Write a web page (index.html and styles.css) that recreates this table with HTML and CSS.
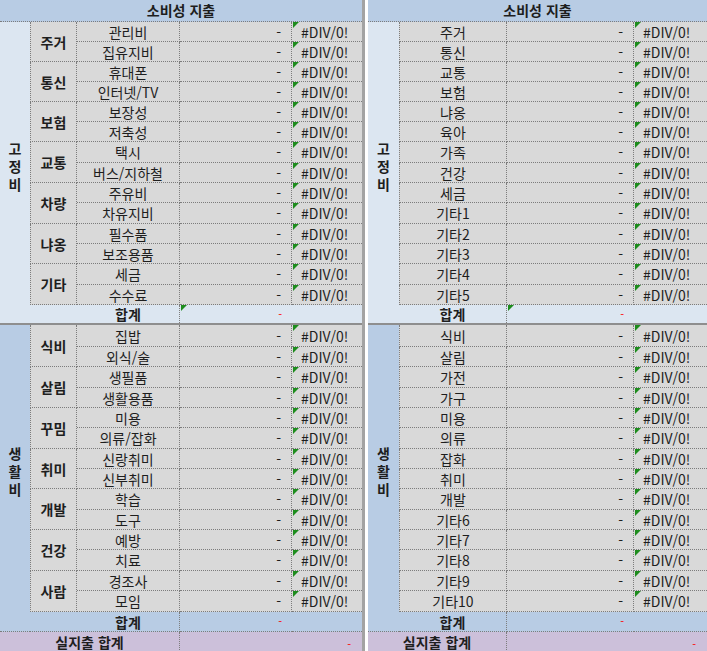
FILE: index.html
```html
<!DOCTYPE html>
<html lang="ko">
<head>
<meta charset="utf-8">
<title>소비성 지출</title>
<link rel="stylesheet" href="styles.css">
</head>
<body>
<div class="sheet">
  <div class="tbl tbl-left">
    <div class="hd">소비성 지출</div>
    <div class="cat cat-fix"><span class="vtext">고정비</span></div>
    <div class="grp">주거</div><div class="item">관리비</div><div class="val">-</div><div class="err">#DIV/0!</div>
    <div class="item">집유지비</div><div class="val">-</div><div class="err">#DIV/0!</div>
    <div class="grp">통신</div><div class="item">휴대폰</div><div class="val">-</div><div class="err">#DIV/0!</div>
    <div class="item">인터넷/TV</div><div class="val">-</div><div class="err">#DIV/0!</div>
    <div class="grp">보험</div><div class="item">보장성</div><div class="val">-</div><div class="err">#DIV/0!</div>
    <div class="item">저축성</div><div class="val">-</div><div class="err">#DIV/0!</div>
    <div class="grp">교통</div><div class="item">택시</div><div class="val">-</div><div class="err">#DIV/0!</div>
    <div class="item">버스/지하철</div><div class="val">-</div><div class="err">#DIV/0!</div>
    <div class="grp">차량</div><div class="item">주유비</div><div class="val">-</div><div class="err">#DIV/0!</div>
    <div class="item">차유지비</div><div class="val">-</div><div class="err">#DIV/0!</div>
    <div class="grp">냐옹</div><div class="item">필수품</div><div class="val">-</div><div class="err">#DIV/0!</div>
    <div class="item">보조용품</div><div class="val">-</div><div class="err">#DIV/0!</div>
    <div class="grp">기타</div><div class="item">세금</div><div class="val">-</div><div class="err">#DIV/0!</div>
    <div class="item">수수료</div><div class="val">-</div><div class="err">#DIV/0!</div>
    <div class="sum-blank sum-fix"></div><div class="sum-label sum-fix">합계</div><div class="sum-val sum-fix flag">-</div><div class="sum-end sum-fix"></div>
    <div class="sep"></div>
    <div class="cat cat-life"><span class="vtext">생활비</span></div>
    <div class="grp">식비</div><div class="item">집밥</div><div class="val">-</div><div class="err">#DIV/0!</div>
    <div class="item">외식/술</div><div class="val">-</div><div class="err">#DIV/0!</div>
    <div class="grp">살림</div><div class="item">생필품</div><div class="val">-</div><div class="err">#DIV/0!</div>
    <div class="item">생활용품</div><div class="val">-</div><div class="err">#DIV/0!</div>
    <div class="grp">꾸밈</div><div class="item">미용</div><div class="val">-</div><div class="err">#DIV/0!</div>
    <div class="item">의류/잡화</div><div class="val">-</div><div class="err">#DIV/0!</div>
    <div class="grp">취미</div><div class="item">신랑취미</div><div class="val">-</div><div class="err">#DIV/0!</div>
    <div class="item">신부취미</div><div class="val">-</div><div class="err">#DIV/0!</div>
    <div class="grp">개발</div><div class="item">학습</div><div class="val">-</div><div class="err">#DIV/0!</div>
    <div class="item">도구</div><div class="val">-</div><div class="err">#DIV/0!</div>
    <div class="grp">건강</div><div class="item">예방</div><div class="val">-</div><div class="err">#DIV/0!</div>
    <div class="item">치료</div><div class="val">-</div><div class="err">#DIV/0!</div>
    <div class="grp">사람</div><div class="item">경조사</div><div class="val">-</div><div class="err">#DIV/0!</div>
    <div class="item">모임</div><div class="val">-</div><div class="err">#DIV/0!</div>
    <div class="sum-blank sum-life"></div><div class="sum-label sum-life">합계</div><div class="sum-val sum-life">-</div><div class="sum-end sum-life"></div>
    <div class="total-label total-left">실지출 합계</div><div class="total-gap"></div><div class="total-val">-</div>
  </div>
  <div class="divider"></div>
  <div class="tbl tbl-right">
    <div class="hd">소비성 지출</div>
    <div class="cat cat-fix"><span class="vtext">고정비</span></div>
    <div class="item item-r">주거</div><div class="val">-</div><div class="err">#DIV/0!</div>
    <div class="item item-r">통신</div><div class="val">-</div><div class="err">#DIV/0!</div>
    <div class="item item-r">교통</div><div class="val">-</div><div class="err">#DIV/0!</div>
    <div class="item item-r">보험</div><div class="val">-</div><div class="err">#DIV/0!</div>
    <div class="item item-r">냐옹</div><div class="val">-</div><div class="err">#DIV/0!</div>
    <div class="item item-r">육아</div><div class="val">-</div><div class="err">#DIV/0!</div>
    <div class="item item-r">가족</div><div class="val">-</div><div class="err">#DIV/0!</div>
    <div class="item item-r">건강</div><div class="val">-</div><div class="err">#DIV/0!</div>
    <div class="item item-r">세금</div><div class="val">-</div><div class="err">#DIV/0!</div>
    <div class="item item-r">기타1</div><div class="val">-</div><div class="err">#DIV/0!</div>
    <div class="item item-r">기타2</div><div class="val">-</div><div class="err">#DIV/0!</div>
    <div class="item item-r">기타3</div><div class="val">-</div><div class="err">#DIV/0!</div>
    <div class="item item-r">기타4</div><div class="val">-</div><div class="err">#DIV/0!</div>
    <div class="item item-r">기타5</div><div class="val">-</div><div class="err">#DIV/0!</div>
    <div class="sum-label sum-fix">합계</div><div class="sum-val sum-fix flag">-</div><div class="sum-end sum-fix"></div>
    <div class="sep"></div>
    <div class="cat cat-life"><span class="vtext">생활비</span></div>
    <div class="item item-r">식비</div><div class="val">-</div><div class="err">#DIV/0!</div>
    <div class="item item-r">살림</div><div class="val">-</div><div class="err">#DIV/0!</div>
    <div class="item item-r">가전</div><div class="val">-</div><div class="err">#DIV/0!</div>
    <div class="item item-r">가구</div><div class="val">-</div><div class="err">#DIV/0!</div>
    <div class="item item-r">미용</div><div class="val">-</div><div class="err">#DIV/0!</div>
    <div class="item item-r">의류</div><div class="val">-</div><div class="err">#DIV/0!</div>
    <div class="item item-r">잡화</div><div class="val">-</div><div class="err">#DIV/0!</div>
    <div class="item item-r">취미</div><div class="val">-</div><div class="err">#DIV/0!</div>
    <div class="item item-r">개발</div><div class="val">-</div><div class="err">#DIV/0!</div>
    <div class="item item-r">기타6</div><div class="val">-</div><div class="err">#DIV/0!</div>
    <div class="item item-r">기타7</div><div class="val">-</div><div class="err">#DIV/0!</div>
    <div class="item item-r">기타8</div><div class="val">-</div><div class="err">#DIV/0!</div>
    <div class="item item-r">기타9</div><div class="val">-</div><div class="err">#DIV/0!</div>
    <div class="item item-r">기타10</div><div class="val">-</div><div class="err">#DIV/0!</div>
    <div class="sum-label sum-life">합계</div><div class="sum-val sum-life">-</div><div class="sum-end sum-life"></div>
    <div class="total-label total-right">실지출 합계</div><div class="total-gap"></div><div class="total-val">-</div>
  </div>
</div>
</body>
</html>
```
FILE: styles.css
```css
html, body {
  margin: 0;
  padding: 0;
  background: #ffffff;
}

body {
  font-family: "Noto Sans CJK KR", "Noto Sans", sans-serif;
  font-size: 14px;
  color: #1e1e1e;
  overflow: hidden;
}

.sheet {
  display: flex;
  align-items: stretch;
  width: 707px;
  height: 651px;
  overflow: hidden;
}

.tbl {
  display: grid;
  grid-template-rows:
    22px
    20px 20px 20px 20px 20px 20px 21px 20px 20px 21px 20px 20px 21px 20px
    18px
    2px
    22px 20px 21px 20px 20px 21px 20px 20px 21px 20px 20px 21px 20px 21px
    20px
    20px;
  flex: none;
}

.tbl > div {
  box-sizing: border-box;
  display: flex;
  align-items: center;
  justify-content: center;
  line-height: 1;
  white-space: nowrap;
  position: relative;
  min-width: 0;
}

.tbl-left {
  width: 362px;
  grid-template-columns: 30px 47px 103px 112px 70px;
}

.tbl-right {
  width: 339px;
  grid-template-columns: 31px 108px 127px 73px;
}

.divider {
  flex: none;
  width: 3px;
  margin-right: 3px;
  background: #a3a3a3;
}

.hd {
  grid-column: 1 / -1;
  background: #b8cce4;
  font-weight: 700;
  border-bottom: 1px dotted #7c7c7c;
  padding-bottom: 1px;
}

.cat {
  grid-row: span 15;
  font-weight: 700;
  padding-bottom: 8px;
}

.vtext {
  writing-mode: vertical-rl;
  text-orientation: upright;
  letter-spacing: 4px;
  line-height: 16px;
}

.cat-fix {
  background: #dce6f1;
}

.cat-life {
  background: #b8cce4;
  border-bottom: 1px dotted #7c7c7c;
}

.grp {
  grid-row: span 2;
  background: #d9d9d9;
  font-weight: 700;
  border-left: 1px dotted #7c7c7c;
  border-right: 1px dotted #7c7c7c;
  border-bottom: 1px dotted #7c7c7c;
}

.item {
  background: #d9d9d9;
  border-right: 1px dotted #7c7c7c;
  border-bottom: 1px dotted #7c7c7c;
}

.item-r {
  border-left: 1px dotted #7c7c7c;
}

.val {
  background: #d9d9d9;
  border-right: 1px dotted #7c7c7c;
  border-bottom: 1px dotted #7c7c7c;
  justify-content: flex-end !important;
  padding-right: 10px;
}

.err {
  background: #d9d9d9;
  border-bottom: 1px dotted #7c7c7c;
  justify-content: flex-start !important;
  padding-left: 9px;
}

.err::before,
.flag::before {
  content: "";
  position: absolute;
  left: 1px;
  top: 0;
  width: 0;
  height: 0;
  border-top: 6px solid #1d8c1d;
  border-right: 6px solid transparent;
}

.sum-fix {
  background: #dce6f1;
}

.sum-life {
  background: #b8cce4;
  border-bottom: 1px dotted #7c7c7c;
}

.sum-label {
  font-weight: 700;
  border-right: 1px dotted #7c7c7c;
}

.sum-val {
  justify-content: flex-end !important;
  padding-right: 10px;
  color: #ff0000;
  font-size: 11px;
}

.sep {
  grid-column: 1 / -1;
  background: #8e8e8e;
}

.total-label {
  background: #ccc0da;
  font-weight: 700;
  border-right: 1px dotted #7c7c7c;
}

.total-left {
  grid-column: span 3;
}

.total-right {
  grid-column: span 2;
}

.total-gap {
  background: #ccc0da;
}

.total-val {
  background: #ccc0da;
  justify-content: flex-end !important;
  padding-right: 11px;
  padding-top: 4px;
  color: #ff0000;
  font-size: 11px;
}
```
